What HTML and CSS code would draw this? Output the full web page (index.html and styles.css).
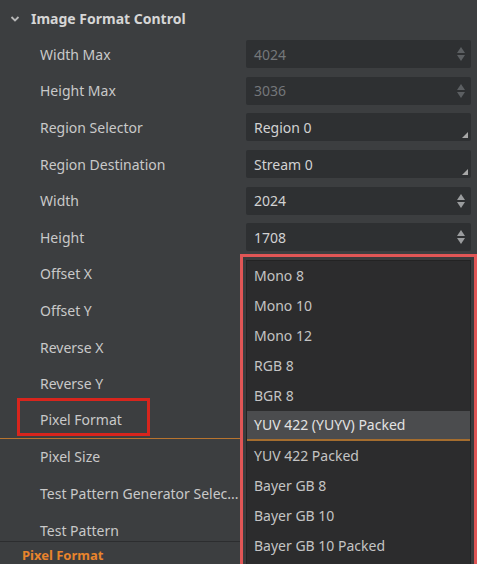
FILE: index.html
```html
<!DOCTYPE html>
<html>
<head>
<meta charset="utf-8">
<link rel="stylesheet" href="styles.css">
</head>
<body>
<div class="panel">
  <div class="header">
    <svg class="chev" width="10" height="8" viewBox="0 0 10 8"><path d="M1.5 2 L5 5.5 L8.5 2" fill="none" stroke="#b8b8b8" stroke-width="1.8"/></svg>
    <span class="title">Image Format Control</span>
  </div>
  <div class="rows">
    <div class="row"><span class="label">Width Max</span><div class="field disabled"><span>4024</span><span class="spin"><i class="up"></i><i class="down"></i></span></div></div>
    <div class="row"><span class="label">Height Max</span><div class="field disabled"><span>3036</span><span class="spin"><i class="up"></i><i class="down"></i></span></div></div>
    <div class="row"><span class="label">Region Selector</span><div class="field combo"><span>Region 0</span><i class="corner"></i></div></div>
    <div class="row"><span class="label">Region Destination</span><div class="field combo"><span>Stream 0</span><i class="corner"></i></div></div>
    <div class="row"><span class="label">Width</span><div class="field"><span>2024</span><span class="spin"><i class="up"></i><i class="down"></i></span></div></div>
    <div class="row"><span class="label">Height</span><div class="field"><span>1708</span><span class="spin"><i class="up"></i><i class="down"></i></span></div></div>
    <div class="row"><span class="label">Offset X</span></div>
    <div class="row"><span class="label">Offset Y</span></div>
    <div class="row"><span class="label">Reverse X</span></div>
    <div class="row"><span class="label">Reverse Y</span></div>
    <div class="row selected"><span class="label">Pixel Format</span></div>
    <div class="row"><span class="label">Pixel Size</span></div>
    <div class="row"><span class="label">Test Pattern Generator Selec...</span></div>
    <div class="row"><span class="label">Test Pattern</span></div>
  </div>
  <div class="desc">Pixel Format</div>

  <div class="mark-label"></div>
  <div class="dropdown">
    <ul class="list">
      <li>Mono 8</li>
      <li>Mono 10</li>
      <li>Mono 12</li>
      <li>RGB 8</li>
      <li>BGR 8</li>
      <li class="hl">YUV 422 (YUYV) Packed</li>
      <li>YUV 422 Packed</li>
      <li>Bayer GB 8</li>
      <li>Bayer GB 10</li>
      <li>Bayer GB 10 Packed</li>
    </ul>
  </div>
</div>
</body>
</html>
```
FILE: styles.css
```css
html, body {
  margin: 0;
  padding: 0;
  background: #ffffff;
}
body {
  font-family: "Noto Sans", "Open Sans", "Liberation Sans", sans-serif;
  font-size: 14px;
  color: #c9c9c9;
}
.panel {
  position: relative;
  width: 477px;
  height: 564px;
  background: #3c3e40;
  overflow: hidden;
}
.header {
  height: 36px;
  display: flex;
  align-items: center;
  padding-left: 10px;
  box-sizing: border-box;
}
.chev {
  margin-top: 1px;
}
.title {
  margin-left: 11px;
  font-weight: bold;
  font-size: 14px;
  color: #d6d6d6;
}
.rows {
  height: 505px;
  overflow: hidden;
  display: flex;
  flex-direction: column;
}
.row {
  flex: 0 0 36.6px;
  height: 36.6px;
  display: flex;
  align-items: center;
  box-sizing: border-box;
}
.row.selected {
  border-bottom: 1px solid #b8742f;
}
.label {
  width: 246px;
  padding-left: 40px;
  box-sizing: border-box;
  white-space: nowrap;
  color: #c9c9c9;
}
.field {
  position: relative;
  width: 225px;
  height: 28px;
  background: #2e3032;
  border-radius: 2px;
  display: flex;
  align-items: center;
  padding-left: 8px;
  box-sizing: border-box;
  color: #d2d2d2;
}
.field.disabled {
  color: #74777a;
}
.spin {
  position: absolute;
  right: 6px;
  top: 5px;
  width: 8px;
  height: 18px;
}
.spin i {
  position: absolute;
  left: 0;
  width: 0;
  height: 0;
  border-left: 4px solid transparent;
  border-right: 4px solid transparent;
}
.spin .up {
  top: 2px;
  border-bottom: 6px solid #9a9c9e;
}
.spin .down {
  bottom: 2px;
  border-top: 6px solid #9a9c9e;
}
.disabled .spin .up { border-bottom-color: #5c5f62; }
.disabled .spin .down { border-top-color: #5c5f62; }
.corner {
  position: absolute;
  right: 3px;
  bottom: 3px;
  width: 0;
  height: 0;
  border-left: 6px solid transparent;
  border-bottom: 6px solid #a8a8a8;
}
.desc {
  border-top: 1px solid #2c2d2f;
  padding: 5px 0 0 22px;
  font-weight: bold;
  font-size: 13px;
  line-height: 16px;
  color: #e8842c;
}
.mark-label {
  position: absolute;
  left: 17px;
  top: 398px;
  width: 133px;
  height: 38px;
  border: 3px solid #d8251d;
  box-sizing: border-box;
}
.dropdown {
  position: absolute;
  left: 240px;
  top: 254px;
  width: 237px;
  height: 320px;
  border: 3px solid #e05656;
  box-sizing: border-box;
  background: #3a3b3d;
  padding: 3px 3px 0 3px;
}
.list {
  list-style: none;
  margin: 0;
  padding: 0;
  height: 100%;
  background: #2c2c2d;
  border: 1px solid #232323;
  box-sizing: border-box;
}
.list li {
  height: 30px;
  line-height: 30px;
  padding-left: 7px;
  color: #c4c4c4;
  box-sizing: border-box;
}
.list li.hl {
  background: #4b4c4e;
  color: #e2e2e2;
  border-bottom: 2px solid #a56d2e;
  line-height: 28px;
}
```
